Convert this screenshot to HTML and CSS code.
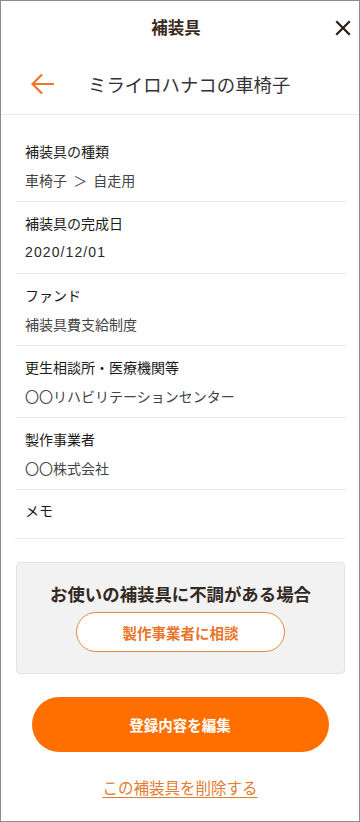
FILE: index.html
```html
<!DOCTYPE html>
<html lang="ja">
<head>
<meta charset="utf-8">
<meta name="viewport" content="width=device-width, initial-scale=1">
<title>補装具</title>
<link rel="stylesheet" href="styles.css">
</head>
<body>
<div class="screen">
  <header class="topbar">
    <span class="topbar-spacer"></span>
    <h1 class="topbar-title">補装具</h1>
    <button class="close-btn" aria-label="閉じる">
      <svg width="16" height="16" viewBox="0 0 16 16"><path d="M2 2 L14 14 M14 2 L2 14" stroke="#2b1d12" stroke-width="2.2" stroke-linecap="square" fill="none"/></svg>
    </button>
  </header>
  <div class="navbar">
    <button class="back-btn" aria-label="戻る">
      <svg width="24" height="22" viewBox="0 0 24 22"><path d="M23 11 H2 M11 1.5 L1.5 11 L11 20.5" stroke="#f07526" stroke-width="2.2" fill="none" stroke-linejoin="miter"/></svg>
    </button>
    <h2 class="nav-title">ミライロハナコの車椅子</h2>
  </div>

  <dl class="detail-list">
    <div class="detail-row">
      <dt class="detail-label">補装具の種類</dt>
      <dd class="detail-value detail-value-path">車椅子 ＞ 自走用</dd>
    </div>
    <div class="detail-row">
      <dt class="detail-label">補装具の完成日</dt>
      <dd class="detail-value detail-value-num">2020/12/01</dd>
    </div>
    <div class="detail-row">
      <dt class="detail-label">ファンド</dt>
      <dd class="detail-value">補装具費支給制度</dd>
    </div>
    <div class="detail-row">
      <dt class="detail-label">更生相談所・医療機関等</dt>
      <dd class="detail-value">〇〇リハビリテーションセンター</dd>
    </div>
    <div class="detail-row">
      <dt class="detail-label">製作事業者</dt>
      <dd class="detail-value">〇〇株式会社</dd>
    </div>
    <div class="detail-row detail-row-memo">
      <dt class="detail-label">メモ</dt>
    </div>
  </dl>

  <section class="trouble-box">
    <p class="trouble-title">お使いの補装具に不調がある場合</p>
    <button class="consult-btn">製作事業者に相談</button>
  </section>

  <button class="edit-btn">登録内容を編集</button>
  <a class="delete-link" href="#">この補装具を削除する</a>
</div>
</body>
</html>
```

FILE: styles.css
```css
* { box-sizing: border-box; }
html, body { margin: 0; padding: 0; background: #fff; }
body {
  font-family: "Noto Sans CJK JP", "Noto Sans", sans-serif;
  color: #222;
}
button { font-family: inherit; }
.screen {
  width: 360px;
  height: 822px;
  border: 1px solid #8c8c8c;
  display: flex;
  flex-direction: column;
  overflow: hidden;
}
.topbar {
  height: 52px;
  display: grid;
  grid-template-columns: 1fr auto 1fr;
  align-items: center;
  padding-right: 8px;
}
.topbar-title {
  margin: 0;
  font-size: 16.5px;
  font-weight: 700;
  color: #3b2a1d;
  line-height: 24px;
}
.close-btn {
  justify-self: end;
  border: 0;
  background: none;
  padding: 0;
  width: 16px;
  height: 16px;
  display: flex;
  margin-top: 2px;
}
.navbar {
  height: 62px;
  display: flex;
  align-items: center;
  padding-left: 30px;
  border-bottom: 1px solid #e6e9f1;
}
.back-btn {
  border: 0;
  background: none;
  padding: 0;
  width: 24px;
  height: 22px;
  display: flex;
}
.nav-title {
  margin: 0 0 0 33px;
  font-size: 18.4px;
  font-weight: 400;
  color: #333;
  line-height: 26px;
}
.detail-list {
  margin: 0;
  padding: 15px 13px 0 14px;
}
.detail-row {
  padding: 11px 10px 11px;
  border-bottom: 1px solid #e8ecef;
}
.detail-label {
  font-size: 14px;
  line-height: 20px;
  color: #1a1a1a;
}
.detail-value {
  margin: 9px 0 0;
  font-size: 14px;
  line-height: 20px;
  color: #444;
}
.detail-value-path {
  word-spacing: 3px;
}
.detail-value-num {
  font-family: "Liberation Sans", "Noto Sans CJK JP", sans-serif;
  letter-spacing: 1.1px;
  color: #2a2a2a;
}
.detail-row-memo {
  padding-top: 10px;
  padding-bottom: 18px;
}
.trouble-box {
  margin: 23px 14px 0 15px;
  background: #f2f2f2;
  border: 1px solid #e3e3e3;
  border-radius: 4px;
  padding: 19px 0 21px;
  display: flex;
  flex-direction: column;
  align-items: center;
}
.trouble-title {
  margin: 0;
  font-size: 17.4px;
  font-weight: 700;
  line-height: 24px;
  color: #332a26;
}
.consult-btn {
  margin-top: 6px;
  width: 209px;
  height: 40px;
  border: 1px solid #e58a3f;
  border-radius: 20px;
  background: #fff;
  color: #ea7428;
  font-size: 14.5px;
  font-weight: 700;
}
.edit-btn {
  margin: 23px auto 0;
  width: 297px;
  height: 55px;
  border: 0;
  border-radius: 28px;
  background: #fe6f00;
  color: #fff;
  font-size: 14.5px;
  font-weight: 700;
}
.delete-link {
  align-self: center;
  margin-top: 24px;
  font-size: 15.5px;
  line-height: 22px;
  color: #e37b30;
  text-decoration: underline;
  text-underline-offset: 3px;
}
```
